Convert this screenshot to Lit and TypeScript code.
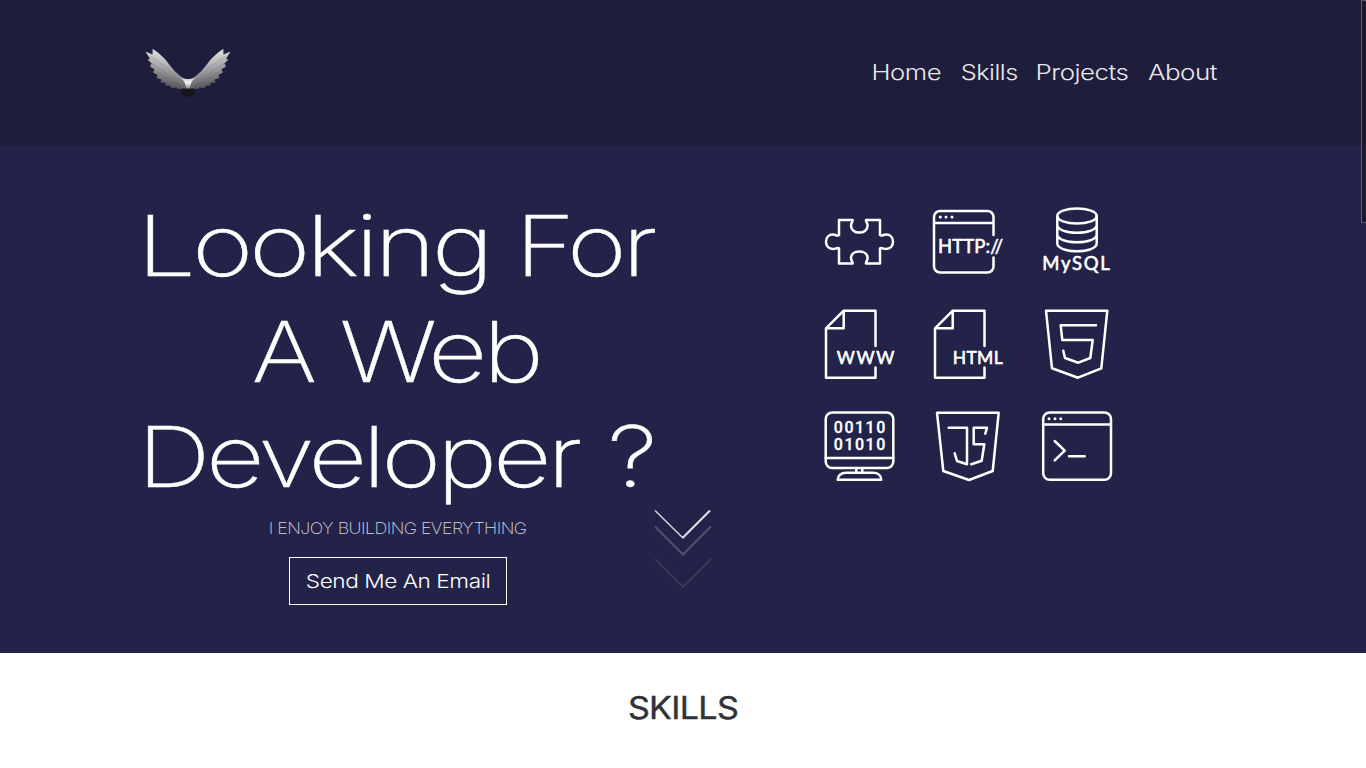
import { LitElement, html, css, svg } from "lit";
import { customElement, property } from "lit/decorators.js";

/** A run of text stretched horizontally so that its ink fills a given width. */
@customElement("fit-text")
class FitText extends LitElement {
  @property() text = "";
  @property({ type: Number }) width = 0;

  static styles = css`
    :host { display: block; flex: none; white-space: pre; text-align: left; }
    .ink { display: inline-block; transform-origin: 0 50%; }
  `;

  render() {
    return html`<span class="ink">${this.text}</span>`;
  }

  updated() {
    const span = this.renderRoot.querySelector(".ink") as HTMLElement;
    const cs = getComputedStyle(this);
    const ctx = document.createElement("canvas").getContext("2d")! as any;
    ctx.font = `${cs.fontWeight} ${cs.fontSize} ${cs.fontFamily}`;
    ctx.letterSpacing = cs.letterSpacing === "normal" ? "0px" : cs.letterSpacing;
    const m = ctx.measureText(this.text);
    const ink = m.actualBoundingBoxRight + m.actualBoundingBoxLeft;
    const k = this.width / ink;
    this.style.width = `${this.width}px`;
    span.style.transform = `translateX(${m.actualBoundingBoxLeft * k}px) scaleX(${k})`;
  }
}

const icons = [
  svg`<path d="M15 13H28.6C28.9 15 27 15.8 27 18.6C27 22.8 30.6 25.6 35.3 25.6S43.6 22.8 43.6 18.6C43.6 15.8 41.7 15 42 13H56V28.2C57.5 29.6 59 27.6 62 27.6C66.3 27.6 69 30.6 69 34.8S66.3 42 62 42C59 42 57.5 40 56 41.4V56.5H42C41.7 54.5 43.6 53.7 43.6 51C43.6 47 40 44.4 35.3 44.4S27 47 27 51C27 53.7 28.9 54.5 28.6 56.5H15V41.4C13.5 40 12 42 9 42C4.7 42 2 39 2 34.8S4.7 27.6 9 27.6C12 27.6 13.5 29.6 15 28.2Z"/>`,
  svg`<path d="M60.500 28V10A6 6 0 0 0 54.500 4H7A6 6 0 0 0 1 10V59.500A6 6 0 0 0 7 65.500H54.500A6 6 0 0 0 60.500 59.500V50.500M1 16H60.500"/>
    <path class="dots" d="M7.300 10h.01M13 10h.01M19 10h.01"/>
    <text class="label" x="5" y="46.200" font-size="18.500" textLength="65" lengthAdjust="spacing">HTTP://</text>`,
  svg`<ellipse cx="35" cy="9" rx="19.700" ry="7.500"/>
    <path d="M15.300 9V36.500C15.300 41 24 44.300 35 44.300S54.700 41 54.700 36.500V9M15.300 18C15.300 22.500 24 25.800 35 25.800S54.700 22.500 54.700 18M15.300 27.500C15.300 32 24 35.300 35 35.300S54.700 32 54.700 27.500"/>
    <text class="label" x=".3" y="63" font-size="18.500" textLength="67.500" lengthAdjust="spacing">MySQL</text>`,
  svg`<path d="M51.500 37V1.700H19.700L2 19.300V68.700H51.500V58.500M19.700 1.700V19.300H2"/>
    <text class="label" x="12.800" y="54.500" font-size="17.500" textLength="57.500" lengthAdjust="spacing">WWW</text>`,
  svg`<path d="M51.500 37V1.700H19.700L2 19.300V68.700H51.500V58.500M19.700 1.700V19.300H2"/>
    <text class="label" x="19.700" y="54.500" font-size="17.500" textLength="50" lengthAdjust="spacing">HTML</text>`,
  svg`<path d="M4 1.700H65.300L59.300 59.300L36 68.700L10 59.300Z M54 16.300H18.700L20.300 31H50.700L48.300 49L36.300 53.700L23 49L21.300 41.700"/>`,
  svg`<rect x="1.700" y="1.500" width="67.600" height="55.500" rx="6.500"/>
    <path d="M1.700 47H69.300M32.300 57V61.700M38.300 57V61.700M13.700 68.800C13.700 64.500 17 61.800 22 61.800H49C54 61.800 57.300 64.500 57.300 68.800Z"/>
    <text class="label bits" x="9.800" y="21.800" font-size="16" textLength="51.500" lengthAdjust="spacing">00110</text>
    <text class="label bits" x="9.800" y="39.300" font-size="16" textLength="51.500" lengthAdjust="spacing">01010</text>`,
  svg`<path d="M4 1.700H65.700L59.700 60L36 69L10.300 60Z M15.700 16.700H34V53.300L24 50L21.700 42.300M52.300 22.700L54 16.700H40.700V33.300H51.300L48.700 49.700L38.300 53.300"/>`,
  svg`<rect x="1.200" y="1.500" width="67.800" height="67.300" rx="6.500"/><path d="M1 13.500H69M12.700 30L22.700 39.700L12.700 49.300M27 45.300H42.700"/>
    <path class="dots" d="M7 7.700h.01M13 7.700h.01M18.700 7.700h.01"/>`,
];

const wing = svg`
  <path d="M7.700 .8L13.500 5L20 11L25 17.500L30 23.500L37 29.500L43 31.500V40.500L38 40.500L33 41.300L31.500 39.500L26.500 40.500L25.500 37.800L20.500 38L20.500 35L15.500 34.500L16.500 31.500L11.500 30L12.500 27L8 24.500L9.500 21.500L5 18.500L6.500 15.500L2.500 11.500L5 11L.5 3.500L7.500 6.500Z"/>`;

@customElement("app-root")
class AppRoot extends LitElement {
  static styles = css`
    :host {
      display: block; position: relative; height: 768px; overflow: hidden; background: #fff;
      font-family: Inter, "Open Sans", sans-serif; color: #fff;
    }
    header {
      height: 146px; box-sizing: border-box; padding: 0 149px 0 145px; background: #1e1e3c;
      display: flex; align-items: center; justify-content: space-between;
    }
    .logo { display: block; width: 87px; height: 50px; }
    nav { display: flex; gap: 20.700px; font-size: 21.500px; line-height: 30px; font-weight: 300; letter-spacing: -.02em; color: #e9e9ec; padding-bottom: 3px; }
    .hero {
      height: 507px; box-sizing: border-box; background: #232248; padding: 47px 0 0 142px;
      display: grid; grid-template-columns: 510px 288px; column-gap: 172px; align-items: start;
    }
    h1 { margin: 0; font-size: 84.500px; font-weight: 200; line-height: 105.600px; letter-spacing: -.04em; -webkit-text-stroke: .4px #fff; }
    .line { display: flex; height: 105.600px; padding-left: 5px; gap: 40px; }
    .second { padding-left: 112px; gap: 28px; }
    .third { gap: 31px; }
    .pitch { display: flex; flex-direction: column; }
    .tagline { margin: 7px 0 0 128px; font-size: 15.400px; line-height: 24px; font-weight: 200; letter-spacing: -.03em; color: #d6d6de; }
    .mail {
      margin: 16px 0 0 147px; width: 218px; height: 48px; box-sizing: border-box; border: 1px solid #fff;
      display: flex; align-items: center; justify-content: center; color: #fff; background: none; padding: 0;
      font: 350 19.300px/30px Inter, "Open Sans", sans-serif; letter-spacing: -.02em;
    }
    .icons { display: grid; grid-template-columns: repeat(3, 70px); gap: 32px 39px; padding-top: 13.700px; }
    .icon { display: block; width: 70px; height: 70px; overflow: visible; fill: none; stroke: #fff; stroke-width: 2.500; stroke-linejoin: round; stroke-linecap: round; }
    .label { fill: #fff; stroke: #fff; stroke-width: .6; font-family: Lato, sans-serif; font-weight: 400; }
    .bits { stroke-width: .3; font-family: Roboto, sans-serif; font-weight: 500; }
    .dots { stroke-width: 3; }
    .scroll { position: absolute; left: 653px; top: 508px; width: 60px; height: 82px; fill: none; stroke: #fff; }
    .thumb { position: absolute; right: 0; top: 0; width: 4px; height: 221px; background: #1a1a25; border: 1px solid #5c5c76; border-right: 0; }
    .skills { display: flex; justify-content: center; padding-top: 36px; }
    h2 { margin: 0; font-size: 30.800px; line-height: 38px; font-weight: 400; letter-spacing: -.02em; color: #2f3237; -webkit-text-stroke: .4px #2f3237; }
  `;

  render() {
    return html`
      <header>
        <svg class="logo" viewBox="0 0 87 50">
          <defs>
            <linearGradient id="feather" x1="0.6" y1="0" x2="0.35" y2="1">
              <stop offset="0" stop-color="#f4f4f4"/><stop offset=".35" stop-color="#bcbcbe"/>
              <stop offset=".7" stop-color="#7c7c7e"/><stop offset="1" stop-color="#3c3c40"/>
            </linearGradient>
            <linearGradient id="body" x1="0" y1="0" x2="0" y2="1">
              <stop offset="0" stop-color="#b5b5b8"/><stop offset=".5" stop-color="#f2f2f2"/><stop offset="1" stop-color="#8a8a8d"/>
            </linearGradient>
          </defs>
          <path fill="#15151a" d="M38 39L35.500 46.500L39 47.500L43 49.500L47 47.500L50.500 46.500L48 39Z"/>
          <g fill="url(#feather)">${wing}</g>
          <g fill="url(#feather)" transform="translate(86 0) scale(-1 1)">${wing}</g>
          <g fill="none" stroke="#505054" stroke-width=".7" opacity=".3">
            <path d="M4 8L20 18L34 33M6 15L20 24L34 36M10 23L22 30L34 38M82 8L66 18L52 33M80 15L66 24L52 36M76 23L64 30L52 38"/>
          </g>
          <path fill="url(#body)" d="M35 28.500L39 31H47L51 28.500L46.500 34L44.500 40.500H41.500L39.500 34Z"/>
        </svg>
        <nav>
          <fit-text text="Home" width="67"></fit-text>
          <fit-text text="Skills" width="55"></fit-text>
          <fit-text text="Projects" width="89.5"></fit-text>
          <fit-text text="About" width="69"></fit-text>
        </nav>
      </header>
      <section class="hero">
        <div class="pitch">
          <h1>
            <div class="line"><fit-text text="Looking" width="338"></fit-text><fit-text text="For" width="130"></fit-text></div>
            <div class="line second"><fit-text text="A" width="60"></fit-text><fit-text text="Web" width="196"></fit-text></div>
            <div class="line third"><fit-text text="Developer" width="433"></fit-text><fit-text text="?" width="41"></fit-text></div>
          </h1>
          <div class="tagline"><fit-text text="I ENJOY BUILDING EVERYTHING" width="256.5"></fit-text></div>
          <button class="mail"><fit-text text="Send Me An Email" width="182"></fit-text></button>
        </div>
        <div class="icons">
          ${icons.map((i) => html`<svg class="icon" viewBox="0 0 70 70">${i}</svg>`)}
        </div>
      </section>
      <section class="skills"><h2><fit-text text="SKILLS" width="109"></fit-text></h2></section>
      <svg class="scroll" viewBox="0 0 60 82">
        <path d="M2 2.500L30 30" stroke-width="1.300" opacity=".85"/>
        <path d="M29.500 30L57 2.500" stroke-width="2.200" opacity=".85"/>
        <path d="M2 18.500L30 46.500L58 18.500" stroke-width="2" opacity=".22"/>
        <path d="M2 51L30 79L58 51" stroke-width="2" opacity=".1"/>
      </svg>
      <div class="thumb"></div>
    `;
  }
}
